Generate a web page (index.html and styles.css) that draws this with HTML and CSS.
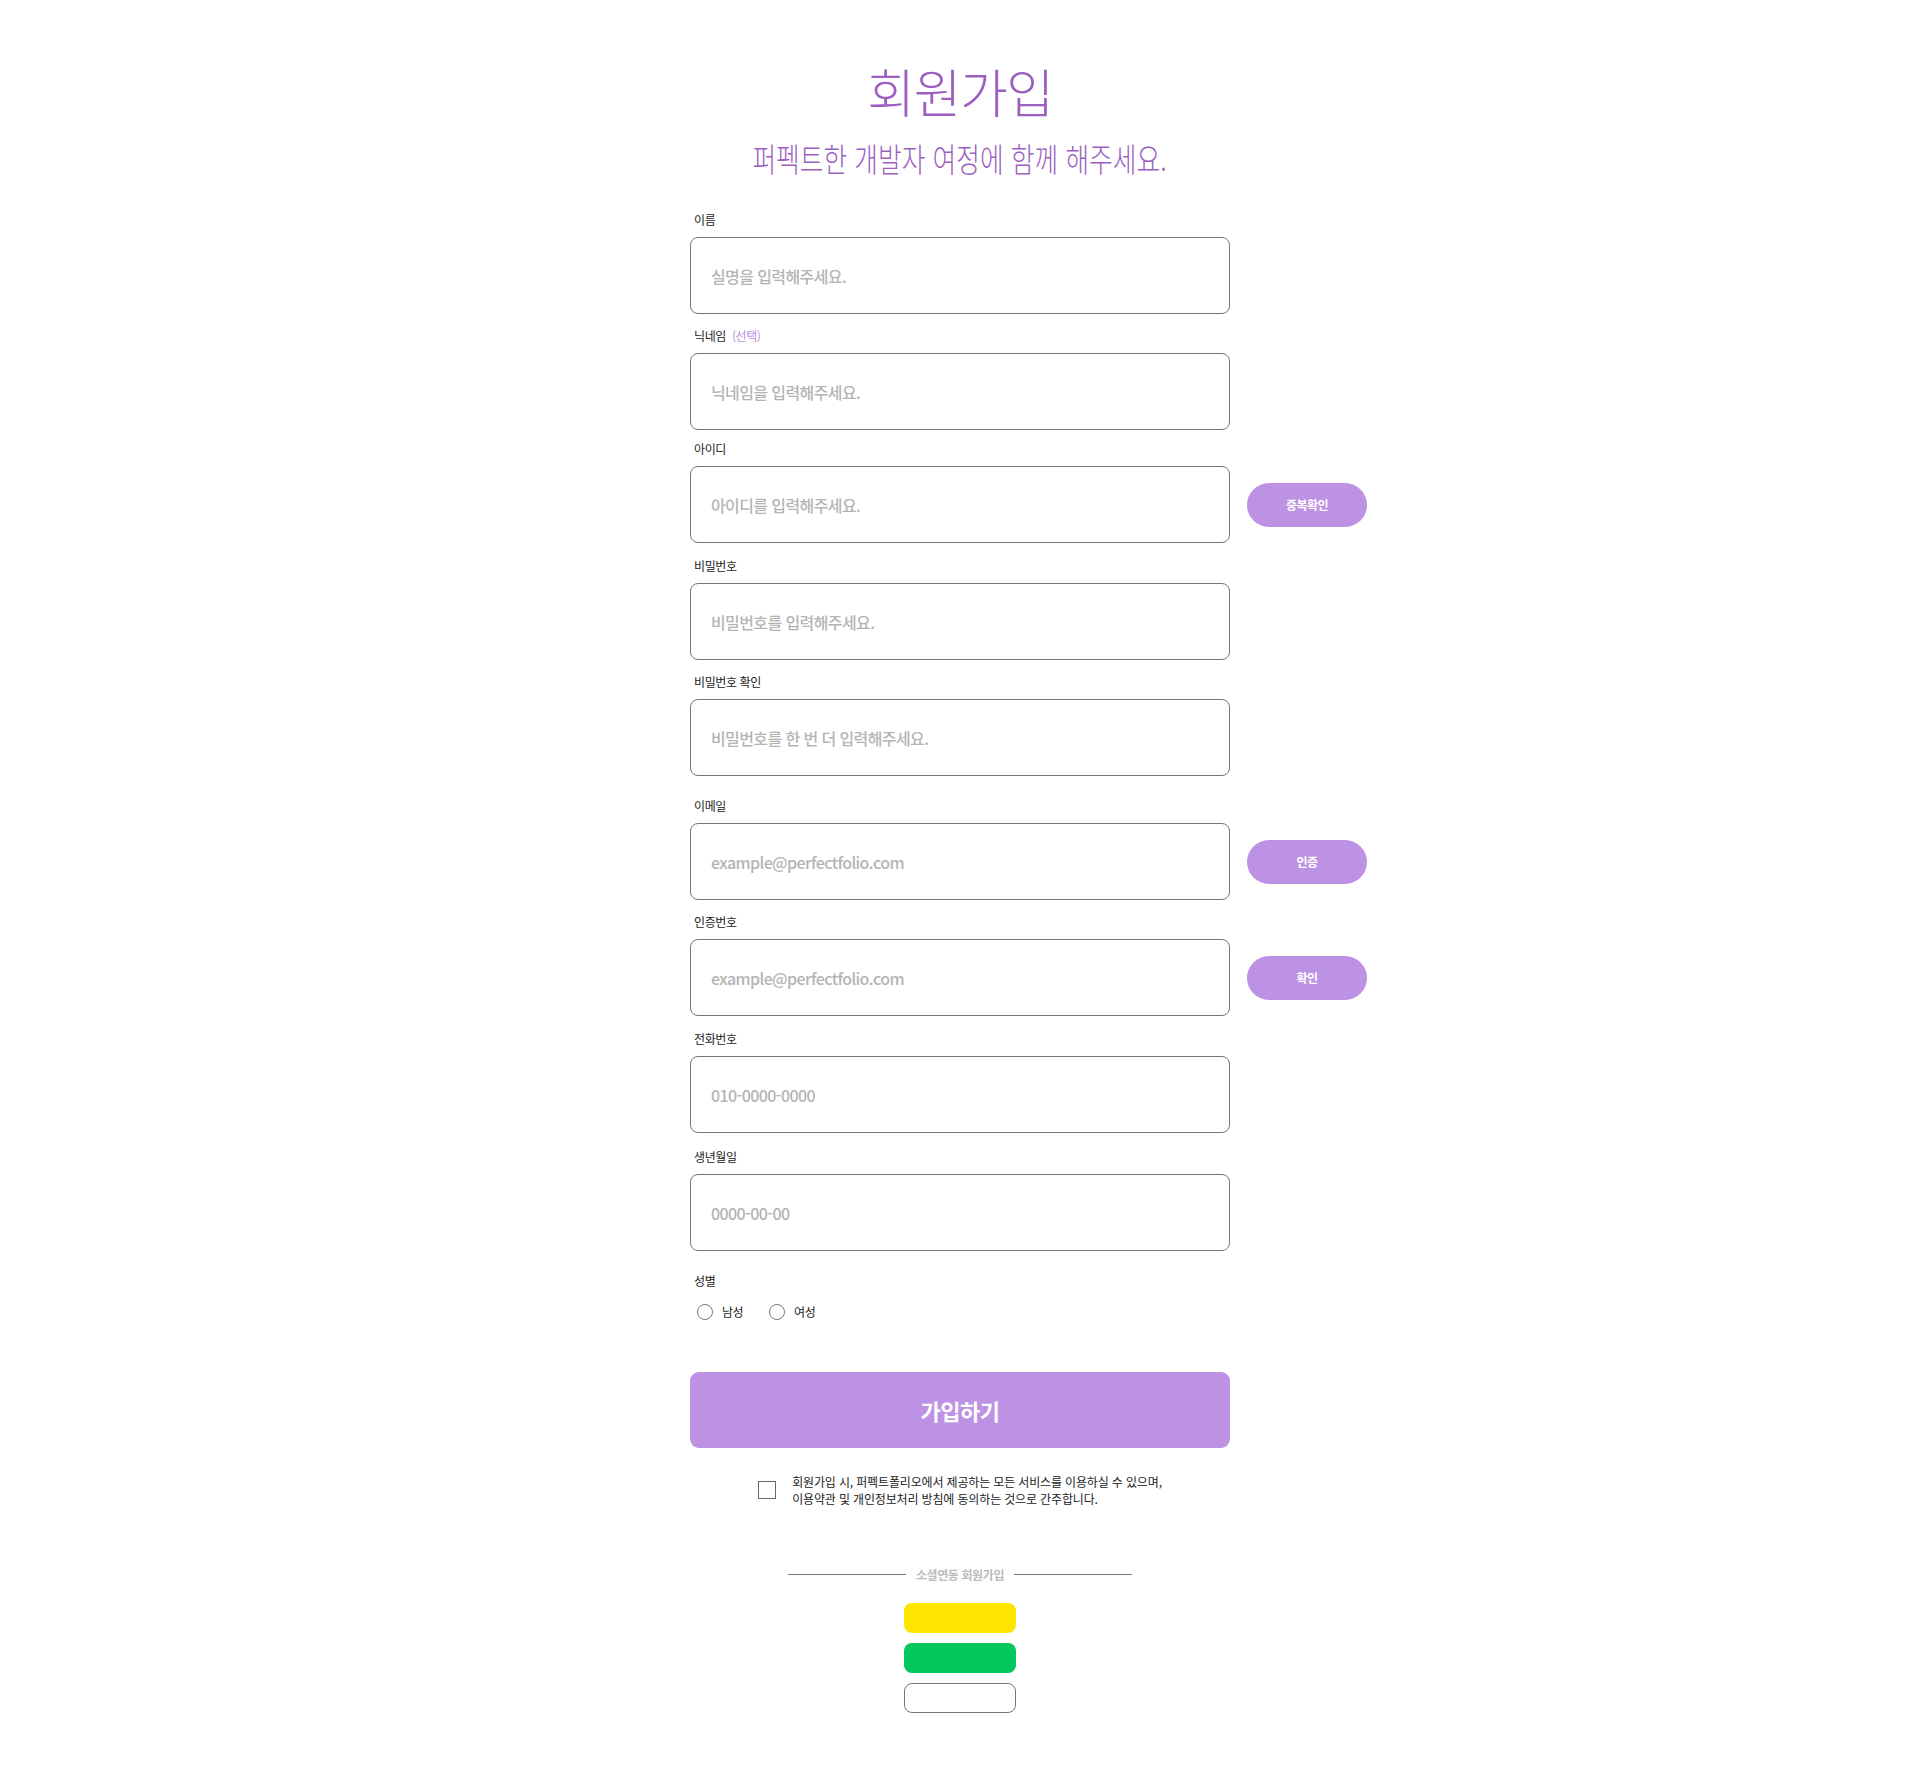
FILE: index.html
```html
<!DOCTYPE html>
<html lang="ko">
<head>
<meta charset="utf-8">
<title>회원가입</title>
<link rel="stylesheet" href="styles.css">
</head>
<body>
<main class="page">
  <header class="head">
    <h1 class="title">회원가입</h1>
    <p class="subtitle"><span class="subtitle-text">퍼펙트한 개발자 여정에 함께 해주세요.</span></p>
  </header>

  <form class="form">
    <div class="field">
      <label class="label">이름</label>
      <input class="input" type="text" placeholder="실명을 입력해주세요.">
    </div>
    <div class="field field-tight">
      <label class="label">닉네임 <span class="optional">(선택)</span></label>
      <input class="input" type="text" placeholder="닉네임을 입력해주세요.">
    </div>
    <div class="field field-loose">
      <label class="label">아이디</label>
      <input class="input" type="text" placeholder="아이디를 입력해주세요.">
      <button type="button" class="side-btn">중복확인</button>
    </div>
    <div class="field">
      <label class="label">비밀번호</label>
      <input class="input" type="password" placeholder="비밀번호를 입력해주세요.">
    </div>
    <div class="field">
      <label class="label">비밀번호 확인</label>
      <input class="input" type="password" placeholder="비밀번호를 한 번 더 입력해주세요.">
    </div>
    <div class="field field-gap">
      <label class="label">이메일</label>
      <input class="input" type="text" placeholder="example@perfectfolio.com">
      <button type="button" class="side-btn">인증</button>
    </div>
    <div class="field field-wide">
      <label class="label">인증번호</label>
      <input class="input" type="text" placeholder="example@perfectfolio.com">
      <button type="button" class="side-btn">확인</button>
    </div>
    <div class="field field-wider">
      <label class="label">전화번호</label>
      <input class="input" type="text" placeholder="010-0000-0000">
    </div>
    <div class="field">
      <label class="label">생년월일</label>
      <input class="input" type="text" placeholder="0000-00-00">
    </div>

    <div class="field gender">
      <span class="label">성별</span>
      <div class="radios">
        <label class="radio"><input type="radio" name="gender"><span>남성</span></label>
        <label class="radio"><input type="radio" name="gender"><span>여성</span></label>
      </div>
    </div>

    <div class="submit-wrap">
      <button type="button" class="submit">가입하기</button>
    </div>

    <label class="agree">
      <input type="checkbox" class="agree-box">
      <span class="agree-text">회원가입 시, 퍼펙트폴리오에서 제공하는 모든 서비스를 이용하실 수 있으며,<br>이용약관 및 개인정보처리 방침에 동의하는 것으로 간주합니다.</span>
    </label>
  </form>

  <section class="social">
    <div class="divider"><span class="line"></span><span class="divider-text">소셜연동 회원가입</span><span class="line"></span></div>
    <div class="social-list">
      <button type="button" class="social-btn kakao"></button>
      <button type="button" class="social-btn naver"></button>
      <button type="button" class="social-btn google"></button>
    </div>
  </section>
</main>
</body>
</html>
```

FILE: styles.css
```css
* { box-sizing: border-box; }

html, body {
  margin: 0;
  padding: 0;
  background: #ffffff;
}

body {
  font-family: "Noto Sans CJK KR", "Noto Sans", sans-serif;
  color: #222222;
}

.page {
  width: 100%;
  padding: 60px 0 62px;
  display: flex;
  flex-direction: column;
  align-items: center;
}

.head {
  text-align: center;
}

.title {
  margin: 0;
  font-size: 52px;
  line-height: 62px;
  font-weight: 300;
  letter-spacing: -1.5px;
  color: #9b5fc0;
}

.subtitle {
  margin: 16px 0 0;
  font-size: 33px;
  line-height: 40px;
  font-weight: 300;
  color: #9b5fc0;
  white-space: nowrap;
}

.subtitle-text {
  display: inline-block;
  transform: scaleX(0.78);
}

.form {
  margin-top: 33px;
  width: 100%;
  display: flex;
  flex-direction: column;
}

.field {
  display: grid;
  grid-template-columns: 1fr 540px 1fr;
  column-gap: 17px;
  row-gap: 9px;
  margin-bottom: 13px;
}

.field-tight { margin-bottom: 10px; }
.field-loose { margin-bottom: 14px; }
.field-wide { margin-bottom: 14px; }
.field-wider { margin-bottom: 15px; }

.field-gap {
  margin-top: 8px;
}

.label {
  grid-column: 2;
  padding-left: 4px;
  font-size: 12px;
  line-height: 17px;
  color: #222222;
  letter-spacing: -0.4px;
}

.optional {
  margin-left: 3px;
  color: #b98fdc;
}

.input {
  grid-column: 2;
  grid-row: 2;
  width: 540px;
  height: 77px;
  margin: 0;
  padding: 0 20px;
  border: 1px solid #777777;
  border-radius: 8px;
  background: #ffffff;
  font-family: inherit;
  font-size: 16px;
  font-weight: 500;
  color: #222222;
  outline: none;
}

.input::placeholder {
  color: #b4b4b4;
  letter-spacing: -0.6px;
}

.side-btn {
  grid-column: 3;
  grid-row: 2;
  justify-self: start;
  align-self: center;
  width: 120px;
  height: 44px;
  border: 0;
  border-radius: 22px;
  background: #bd91e3;
  color: #ffffff;
  font-family: inherit;
  font-size: 12px;
  font-weight: 700;
  letter-spacing: -0.5px;
  cursor: pointer;
}

.gender {
  margin-top: 8px;
  row-gap: 14px;
}

.radios {
  grid-column: 2;
  display: flex;
  align-items: center;
  gap: 26px;
  padding-left: 7px;
}

.radio {
  display: flex;
  align-items: center;
  gap: 9px;
  font-size: 12px;
  line-height: 17px;
  letter-spacing: -0.5px;
  color: #222222;
}

.radio input {
  appearance: none;
  -webkit-appearance: none;
  margin: 0;
  width: 16px;
  height: 16px;
  border: 1px solid #777777;
  border-radius: 50%;
  background: #ffffff;
}

.submit-wrap {
  display: flex;
  justify-content: center;
  margin-top: 39px;
}

.submit {
  width: 540px;
  height: 76px;
  border: 0;
  border-radius: 9px;
  background: #bd91e3;
  color: #ffffff;
  font-family: inherit;
  font-size: 22px;
  font-weight: 700;
  letter-spacing: -0.5px;
  cursor: pointer;
}

.agree {
  align-self: center;
  display: flex;
  align-items: center;
  gap: 16px;
  margin-top: 25px;
}

.agree-box {
  appearance: none;
  -webkit-appearance: none;
  margin: 0;
  width: 18px;
  height: 18px;
  border: 1px solid #666666;
  border-radius: 0;
  background: #ffffff;
  flex: none;
}

.agree-text {
  font-size: 12px;
  line-height: 17px;
  letter-spacing: -0.15px;
  color: #222222;
}

.social {
  margin-top: 59px;
  display: flex;
  flex-direction: column;
  align-items: center;
}

.divider {
  width: 344px;
  display: flex;
  align-items: center;
  gap: 10px;
}

.line {
  flex: 1;
  height: 1px;
  background: #777777;
}

.divider-text {
  font-size: 12px;
  line-height: 17px;
  font-weight: 700;
  color: #bbbbbb;
  letter-spacing: -0.4px;
}

.social-list {
  margin-top: 20px;
  display: flex;
  flex-direction: column;
  gap: 10px;
}

.social-btn {
  width: 112px;
  height: 30px;
  border: 0;
  border-radius: 8px;
  padding: 0;
  cursor: pointer;
}

.kakao { background: #fee500; }
.naver { background: #03c75a; }
.google {
  background: #ffffff;
  border: 1px solid #777777;
}
```
